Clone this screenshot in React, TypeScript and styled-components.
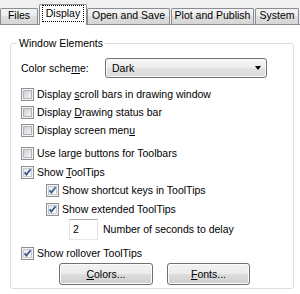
import React from 'react';
import styled, { createGlobalStyle } from 'styled-components';

const Global = createGlobalStyle`
  html, body { margin: 0; padding: 0; background: #fff; }
  body {
    font-family: "Liberation Sans", Arial, sans-serif;
    font-size: 10.5px;
    color: #000;
  }
`;

const Dialog = styled.div`
  width: 300px;
  height: 294px;
  overflow: hidden;
  background: #fff;
  display: flex;
  flex-direction: column;
`;

const TabStrip = styled.div`
  display: flex;
  align-items: flex-end;
  height: 25px;
  box-sizing: border-box;
  background: #f0f0f0;
  border-bottom: 1px solid #898c95;
`;

const Tab = styled.div<{ $w: number; $ml: number; $active?: boolean }>`
  box-sizing: border-box;
  width: ${p => p.$w}px;
  margin-left: ${p => p.$ml}px;
  height: ${p => (p.$active ? 21 : 16)}px;
  margin-bottom: ${p => (p.$active ? -1 : 0)}px;
  border: 1px solid #898c95;
  border-bottom: none;
  border-radius: 2px 2px 0 0;
  background: ${p =>
    p.$active ? '#fff' : 'linear-gradient(#f3f3f3, #ebebeb 50%, #dedede 50%, #d6d6d6)'};
  position: relative;
  z-index: ${p => (p.$active ? 1 : 0)};
  display: flex;
  justify-content: center;
  align-items: flex-start;
  padding-top: ${p => (p.$active ? 1 : 0)}px;
  line-height: 12px;
  white-space: nowrap;
`;

const Focus = styled.span`
  outline: 1px dotted #000;
  outline-offset: 0;
  padding: 1px 3px 2px;
  line-height: 12px;
`;

const Page = styled.div`
  flex: 1;
  padding: 18px 0 0 10px;
`;

const Group = styled.div`
  position: relative;
  box-sizing: border-box;
  width: 284px;
  height: 246px;
  border: 1px solid #d5dfe5;
  border-radius: 3px;
  padding: 14px 0 0 10px;
  display: flex;
  flex-direction: column;
`;

const Legend = styled.span`
  position: absolute;
  top: -7px;
  left: 6px;
  padding: 0 2px;
  background: #fff;
  line-height: 13px;
  white-space: nowrap;
`;

const Row = styled.div<{ $mt?: number; $indent?: number }>`
  display: flex;
  align-items: center;
  margin-top: ${p => p.$mt ?? 0}px;
  margin-left: ${p => p.$indent ?? 0}px;
  line-height: 13px;
  white-space: nowrap;
`;

const Label = styled.span<{ $w?: number }>`
  width: ${p => (p.$w ? `${p.$w}px` : 'auto')};
  display: inline-block;
`;

const U = styled.span`
  text-decoration: underline;
`;

const Select = styled.div`
  box-sizing: border-box;
  width: 162px;
  height: 20px;
  border: 1px solid #707070;
  border-radius: 3px;
  background: linear-gradient(#f6f6f6, #ececec 50%, #e2e2e2 50%, #dadada);
  box-shadow: inset 0 0 0 1px #fbfbfb;
  display: flex;
  align-items: center;
  justify-content: space-between;
  padding: 0 4px 0 6px;
`;

const Arrow = styled.span`
  width: 0;
  height: 0;
  border-left: 3.5px solid transparent;
  border-right: 3.5px solid transparent;
  border-top: 4px solid #000;
  margin-right: 1px;
`;

const Box = styled.span`
  box-sizing: border-box;
  width: 13px;
  height: 13px;
  border: 1px solid #8e8f8f;
  background: #f4f4f4;
  padding: 1px;
  margin-right: 3px;
  flex: none;
  display: inline-flex;
`;

const Inner = styled.span<{ $checked?: boolean }>`
  flex: 1;
  border: 1px solid ${p => (p.$checked ? '#c6cad0' : '#aeb3b9')};
  background: ${p =>
    p.$checked
      ? 'linear-gradient(135deg, #e6e8eb, #fbfbfb)'
      : 'linear-gradient(135deg, #cbcfd5, #f6f6f6)'};
  position: relative;
`;

const Tick = styled.svg`
  position: absolute;
  left: -2px;
  top: -2px;
`;

const NumInput = styled.div`
  box-sizing: border-box;
  width: 29px;
  height: 21px;
  border: 1px solid #e2e3ea;
  border-top-color: #abadb3;
  border-bottom-color: #e3e9ef;
  background: #fff;
  display: flex;
  align-items: center;
  padding-left: 3px;
  margin-right: 5px;
`;

const Button = styled.div<{ $w: number; $ml: number }>`
  box-sizing: border-box;
  width: ${p => p.$w}px;
  margin-left: ${p => p.$ml}px;
  height: 22px;
  border: 1px solid #707070;
  border-radius: 3px;
  background: linear-gradient(#f2f2f2, #ebebeb 50%, #dddddd 50%, #cfcfcf);
  box-shadow: inset 0 0 0 1px #fcfcfc;
  display: flex;
  align-items: center;
  justify-content: center;
`;

const Check: React.FC<{ checked?: boolean }> = ({ checked }) => (
  <Box>
    <Inner $checked={checked}>
      {checked && (
        <Tick width="11" height="11" viewBox="0 0 11 11">
          <path d="M2.6 5.4 L4.4 7.6 L8.6 2.2" fill="none" stroke="#3a5690" strokeWidth="1.7" />
        </Tick>
      )}
    </Inner>
  </Box>
);

type CheckItem = { mt: number; indent?: number; checked?: boolean; label: React.ReactNode };

const checks: CheckItem[] = [
  { mt: 10, label: <>Display <U>s</U>croll bars in drawing window</> },
  { mt: 5, label: <>Display <U>D</U>rawing status bar</> },
  { mt: 5, label: <>Display screen men<U>u</U></> },
  { mt: 10, label: <>Use large buttons for Toolbars</> },
  { mt: 6, checked: true, label: <>Show <U>T</U>oolTips</> },
  { mt: 5, indent: 25, checked: true, label: <>Show shortcut keys in ToolTips</> },
  { mt: 6, indent: 25, checked: true, label: <>Show extended ToolTips</> },
];

const tabs = [
  { name: 'Files', w: 38, ml: 0 },
  { name: 'Display', w: 48, ml: 1, active: true },
  { name: 'Open and Save', w: 83, ml: 0 },
  { name: 'Plot and Publish', w: 83, ml: 1 },
  { name: 'System', w: 44, ml: 1 },
];

export default function App() {
  return (
    <>
      <Global />
      <Dialog>
        <TabStrip>
          {tabs.map(t => (
            <Tab key={t.name} $w={t.w} $ml={t.ml} $active={t.active}>
              {t.active ? <Focus>{t.name}</Focus> : t.name}
            </Tab>
          ))}
        </TabStrip>
        <Page>
          <Group>
            <Legend>Window Elements</Legend>
            <Row>
              <Label $w={84}>Color sche<U>m</U>e:</Label>
              <Select>
                <span>Dark</span>
                <Arrow />
              </Select>
            </Row>
            {checks.map((c, i) => (
              <Row key={i} $mt={c.mt} $indent={c.indent}>
                <Check checked={c.checked} />
                <Label>{c.label}</Label>
              </Row>
            ))}
            <Row $mt={3} $indent={48}>
              <NumInput>2</NumInput>
              <Label>Number of seconds to delay</Label>
            </Row>
            <Row $mt={7}>
              <Check checked />
              <Label>Show rollover ToolTips</Label>
            </Row>
            <Row $mt={3}>
              <Button $w={94} $ml={38}><span><U>C</U>olors...</span></Button>
              <Button $w={83} $ml={14}><span><U>F</U>onts...</span></Button>
            </Row>
          </Group>
        </Page>
      </Dialog>
    </>
  );
}
